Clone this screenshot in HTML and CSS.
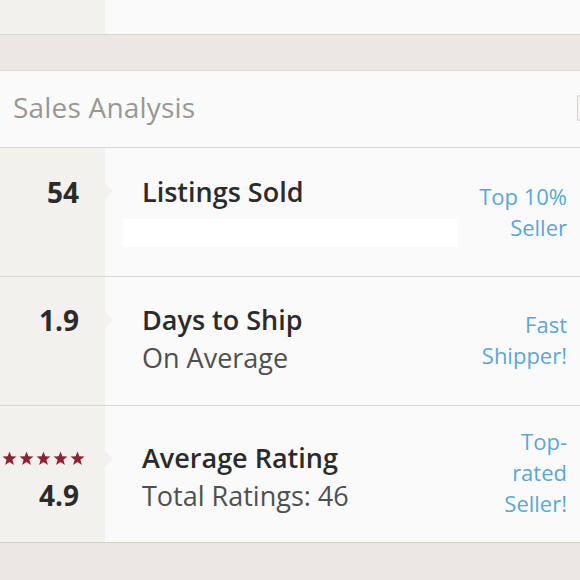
FILE: index.html
```html
<!DOCTYPE html>
<html>
<head>
<meta charset="utf-8">
<link rel="stylesheet" href="styles.css">
</head>
<body>
<div class="top-card">
  <div class="side"></div>
  <div class="main"></div>
</div>
<div class="band"></div>
<div class="card">
  <div class="header">
    <span class="title">Sales Analysis</span>
    <span class="btn"></span>
  </div>
  <div class="row r1">
    <div class="side"><div class="num">54</div></div>
    <div class="main">
      <div class="info">
        <div class="label">Listings Sold</div>
        <div class="redact"></div>
      </div>
      <div class="badge">Top 10%<br>Seller</div>
    </div>
  </div>
  <div class="row r2">
    <div class="side"><div class="num">1.9</div></div>
    <div class="main">
      <div class="info">
        <div class="label">Days to Ship</div>
        <div class="sub">On Average</div>
      </div>
      <div class="badge">Fast<br>Shipper!</div>
    </div>
  </div>
  <div class="row r3">
    <div class="side">
      <div class="stars">
        <svg width="84" height="15" viewBox="0 0 84 15">
          <defs><polygon id="st" points="7.5,0.5 9.3,5.3 14.5,5.5 10.4,8.8 11.9,14 7.5,11 3.1,14 4.6,8.8 0.5,5.5 5.7,5.3"/></defs>
          <use href="#st" x="0"/><use href="#st" x="17"/><use href="#st" x="34"/><use href="#st" x="51"/><use href="#st" x="68"/>
        </svg>
      </div>
      <div class="num">4.9</div>
    </div>
    <div class="main">
      <div class="info">
        <div class="label">Average Rating</div>
        <div class="sub">Total Ratings: 46</div>
      </div>
      <div class="badge">Top-<br>rated<br>Seller!</div>
    </div>
  </div>
</div>
</body>
</html>
```
FILE: styles.css
```css
html, body {
  margin: 0;
  padding: 0;
}
body {
  background: #ebe8e4;
  font-family: "Open Sans", Lato, sans-serif;
  width: 580px;
  height: 580px;
  overflow: hidden;
}
.top-card {
  display: flex;
  height: 34px;
  border-bottom: 1px solid #d9d6d3;
}
.side {
  width: 105px;
  flex: none;
  background: #f3f1ee;
}
.main {
  flex: 1;
  background: #fbfafb;
}
.band {
  height: 35px;
  background: #ebe8e4;
}
.card {
  border-top: 1px solid #d9d6d3;
  border-bottom: 1px solid #d2cfcc;
}
.header {
  height: 77px;
  box-sizing: border-box;
  background: #fbfafb;
  display: flex;
  align-items: flex-start;
  justify-content: space-between;
  padding: 18px 0 0 13px;
  border-bottom: 1px solid #d9d6d3;
}
.title {
  font-size: 28px;
  line-height: 36px;
  color: #9a9793;
  letter-spacing: 0.2px;
}
.btn {
  width: 2px;
  height: 24px;
  margin-top: 6px;
  border: 1px solid #d2cfcc;
  border-right: none;
  border-radius: 5px 0 0 5px;
  background: #f6f5f4;
}
.row {
  display: flex;
  border-bottom: 1px solid #d9d6d3;
}
.row:last-child {
  border-bottom: none;
}
.r1, .r2 { height: 128px; }
.r3 { height: 136px; }
.row .side {
  position: relative;
  display: flex;
  flex-direction: column;
  align-items: flex-end;
  padding-right: 26px;
  box-sizing: border-box;
}
.row .side::after {
  content: "";
  position: absolute;
  left: 105px;
  top: 35px;
  border-left: 8px solid #f3f1ee;
  border-top: 8px solid transparent;
  border-bottom: 8px solid transparent;
}
.r3 .side::after { top: 45px; }
.num {
  font-size: 28px;
  font-weight: 700;
  color: #2b2b2b;
  margin-top: 27px;
  line-height: 34px;
}
.r2 .num { margin-top: 26px; }
.stars {
  margin-top: 45px;
  margin-right: -7px;
  line-height: 0;
}
.stars svg { fill: #8b2335; display: block; }
.r3 .num { margin-top: 12px; }
.main {
  display: flex;
  justify-content: space-between;
  align-items: flex-start;
  padding: 0 13px 0 37px;
}
.info {
  padding-top: 27px;
}
.r2 .info { padding-top: 26px; }
.r3 .info { padding-top: 35px; }
.label {
  font-size: 27px;
  font-weight: 600;
  color: #2b2b2b;
  line-height: 34px;
}
.sub {
  font-size: 27px;
  color: #4f4f4f;
  line-height: 34px;
  margin-top: 4px;
}
.redact {
  width: 334px;
  height: 28px;
  background: #ffffff;
  margin-top: 10px;
  margin-left: -19px;
}
.badge {
  text-align: right;
  color: #5aa7d6;
  font-size: 22px;
  line-height: 31px;
  padding-top: 33px;
}
.r2 .badge { padding-top: 32px; }
.r3 .badge { padding-top: 20px; }
```
